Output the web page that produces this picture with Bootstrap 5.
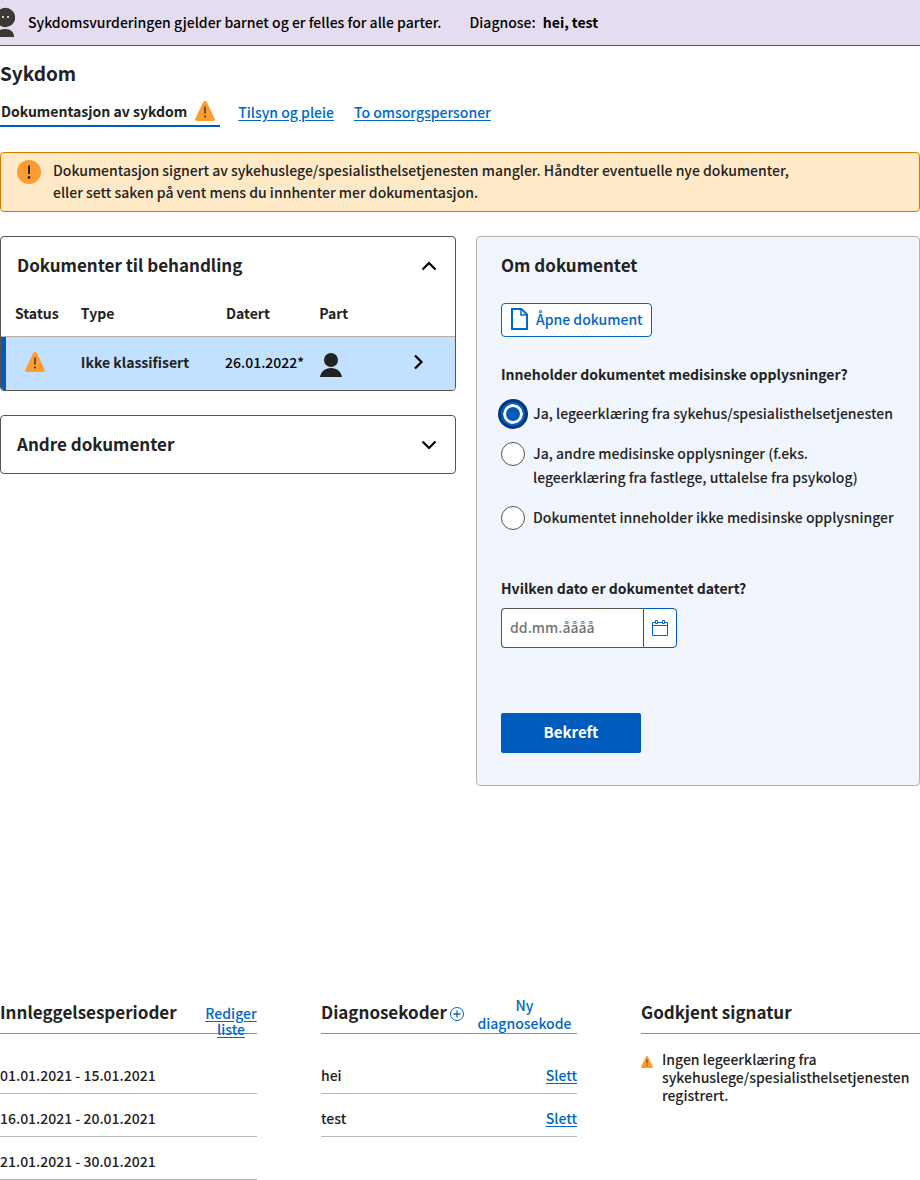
<!DOCTYPE html>
<html lang="nb">
<head>
<meta charset="utf-8">
<meta name="viewport" content="width=device-width, initial-scale=1">
<title>Sykdom</title>
<link href="https://cdn.jsdelivr.net/npm/bootstrap@5.3.0/dist/css/bootstrap.min.css" rel="stylesheet">
<style>
  :root { --blue: #005bbd; --link: #0067c5; --ink: #222; --line: #b7b1a9; }
  body { font-family: "Noto Sans CJK SC", "Noto Sans", sans-serif; font-size: 14px; font-weight: 500; line-height: 24px; color: var(--ink); }
  svg { display: block; flex: none; }
  a, button, input { font-weight: 500; }
  a, .link-btn { color: var(--link); text-underline-offset: 2px; }
  .link-btn { background: none; border: 0; padding: 0; }
  h1, h2 { font-weight: 600; margin: 0; }
  h1 { font-size: 19px; line-height: 28px; margin-top: 13px; }
  h2 { font-size: 17px; line-height: 24px; }

  .child-banner { background: #e6dcef; border-bottom: 1px solid #634689; color: #000; min-height: 46px; padding-bottom: 2px; }
  .child-banner .facts { gap: 28px; margin-left: 13px; }

  .page-tabs { margin-top: 11px; gap: 20px; }
  .page-tabs .nav-link { padding: 0 0 2px; color: var(--link); text-decoration: underline; }
  .page-tabs .nav-link.active { padding: 0 5px 2px 1px; gap: 8px; min-height: 29px; color: var(--ink); font-weight: 600; text-decoration: none; border-bottom: 2px solid var(--blue); margin-right: -2px; }

  .notice { margin: 25px 0 24px; padding: 7px 16px; gap: 12px; background: #ffe9c6; border: 1px solid #d47b00; border-radius: 4px; line-height: 22px; color: var(--ink); }
  .notice p { max-width: 750px; margin-top: -1px; margin-bottom: 1px; }

  .workspace { display: grid; grid-template-columns: 456fr 444fr; gap: 20px; align-items: start; }
  .doc-panel { border: 1px solid #59514b; border-radius: 4px; overflow: hidden; background: #fff; }
  .doc-panel + .doc-panel { margin-top: 24px; }
  .panel-toggle { width: 100%; min-height: 57px; padding: 0 18px 0 16px; background: none; border: 0; color: var(--ink); text-align: left; }
  .panel-toggle h2 { padding-bottom: 2px; }
  .doc-table { table-layout: fixed; width: 100%; }
  .doc-table th, .doc-table td { padding: 0 0 2px 14px; font-weight: 600; }
  .doc-table thead th { height: 42px; padding-bottom: 4px; border-bottom: 1px solid var(--line); }
  .doc-table tbody tr { background: #c2e0ff; height: 54px; }
  .doc-table tbody td:first-child { padding-left: 24px; background: linear-gradient(90deg, var(--blue) 5px, transparent 5px); }
  .doc-table td.dated { padding-left: 13px; font-weight: 500; color: #000; }
  .doc-table td.party { padding-top: 4px; padding-bottom: 0; }

  .detail { background: #f1f5fd; border: 1px solid #b7b1a9; border-radius: 4px; padding: 16px 24px 32px; }
  .open-doc { margin-top: 26px; height: 34px; padding: 0 8px 2px; gap: 8px; background: #fff; color: var(--link); border: 1px solid var(--link); border-radius: 4px; }
  .question { display: block; font-size: 14px; line-height: 24px; font-weight: 600; margin: 0; }
  .choices { margin-top: 25px; }
  .choices .question { margin-bottom: 16px; }
  .choice { display: flex; gap: 8px; }
  .choice + .choice { margin-top: 16px; }
  .choice label { margin: -1px 0 1px; }
  .choice .form-check-input { flex: none; width: 24px; height: 24px; margin: 0; border: 1px solid #59514b; background-color: #fff; }
  .choice .form-check-input:checked { background-image: none; background-color: var(--blue); border: 2px solid #0060c5; box-shadow: inset 0 0 0 3px #fff, 0 0 0 3px #00347d; }
  .date-label { margin: 46px 0 8px; }
  .date-field { width: 176px; height: 40px; }
  .date-field input { min-width: 0; flex: 1; padding: 0 8px 2px; border: 1px solid #59514b; border-right: 0; border-radius: 4px 0 0 4px; background: #fff; color: var(--ink); }
  .date-field input::placeholder { color: #757575; opacity: 1; }
  .date-field button { width: 34px; padding: 0; display: grid; place-items: center; background: #fff; border: 1px solid var(--blue); border-radius: 0 4px 4px 0; }
  .confirm { margin-top: 65px; width: 140px; height: 40px; padding: 0 0 2px; background: var(--blue); color: #fff; border: 0; border-radius: 2px; font-size: 15px; font-weight: 600; }

  .summary { display: grid; grid-template-columns: 257fr 256fr 279fr; gap: 64px; margin-top: 210px; }
  .summary header { display: flex; align-items: flex-start; height: 38px; border-bottom: 1px solid #8c8c8c; margin-bottom: 17px; }
  .summary header h2 { line-height: 32px; }
  .edit-list { line-height: 16px; width: 52px; margin-left: auto; padding-top: 9px; text-decoration: underline; }
  .add-code { display: flex; flex: 1; line-height: 18px; }
  .add-code svg { margin: 11px 0 0 3px; }
  .add-code span { flex: 1; padding: 0 4px 0 12px; }
  .rows li { display: flex; justify-content: space-between; padding: 12px 0 6px; border-bottom: 1px solid #b7b7b7; }
  .missing { display: flex; gap: 9px; line-height: 18px; }
  .missing svg { margin-top: 5px; }
  .missing p { margin-top: -1px; }
</style>
</head>
<body>
<svg width="0" height="0" class="position-absolute" aria-hidden="true">
  <symbol id="warn" viewBox="0 0 20 20">
    <path d="M10 0c.8 0 1.400.4 1.800 1.100l7.900 16.600c.6 1.200-.1 2.300-1.300 2.300H1.600C.4 20-.3 18.900.3 17.700L8.200 1.100C8.600.4 9.200 0 10 0z" fill="#ff9c30"/>
    <path d="M10 5.500v7" stroke="#3e3832" stroke-width="1.500"/><circle cx="10" cy="15.500" r="1.100" fill="#3e3832"/>
  </symbol>
</svg>

<div class="child-banner d-flex align-items-center">
  <svg width="15" height="38" viewBox="0 0 15 38" aria-hidden="true">
    <circle cx="5.500" cy="14.500" r="9.700" fill="#3e3832"/><circle cx="3" cy="14" r="1" fill="#fff"/><circle cx="8" cy="14" r="1" fill="#fff"/>
    <path d="M-4 34c0-5 3-8 9-8s9 3 9 8z" fill="#3e3832"/>
  </svg>
  <div class="facts d-flex flex-wrap">
    <span>Sykdomsvurderingen gjelder barnet og er felles for alle parter.</span>
    <span>Diagnose: <b class="ms-1">hei, test</b></span>
  </div>
</div>

<main>
  <h1>Sykdom</h1>
  <nav class="page-tabs nav align-items-center">
    <a class="nav-link active d-flex align-items-center" aria-current="page" href="#dokumentasjon">Dokumentasjon av sykdom
      <svg width="20" height="20" aria-hidden="true"><use href="#warn"/></svg></a>
    <a class="nav-link" href="#tilsyn">Tilsyn og pleie</a>
    <a class="nav-link" href="#omsorg">To omsorgspersoner</a>
  </nav>

  <div class="notice d-flex" role="alert">
    <svg width="24" height="24" viewBox="0 0 24 24" aria-hidden="true"><circle cx="12" cy="12" r="12" fill="#ff9c30"/><path d="M12 5.500v8.500" stroke="#222" stroke-width="2"/><circle cx="12" cy="17.500" r="1.400" fill="#222"/></svg>
    <p>Dokumentasjon signert av sykehuslege/spesialisthelsetjenesten mangler. Håndter eventuelle nye dokumenter, eller sett saken på vent mens du innhenter mer dokumentasjon.</p>
  </div>

  <div class="workspace">
    <div>
      <section class="doc-panel">
        <button type="button" class="panel-toggle d-flex align-items-center justify-content-between" aria-expanded="true">
          <h2>Dokumenter til behandling</h2>
          <svg width="16" height="10" viewBox="0 0 16 10" fill="none" stroke="#000" stroke-width="2.200"><path d="M1.500 8.500L8 2l6.500 6.500"/></svg>
        </button>
        <table class="doc-table">
          <colgroup><col style="width:14.5%"><col style="width:32%"><col style="width:20.5%"><col style="width:21%"><col style="width:12%"></colgroup>
          <thead><tr><th scope="col">Status</th><th scope="col">Type</th><th scope="col">Datert</th><th scope="col">Part</th><th aria-label="Velg"></th></tr></thead>
          <tbody><tr>
            <td><svg width="20" height="20" aria-hidden="true"><use href="#warn"/></svg></td>
            <td>Ikke klassifisert</td>
            <td class="dated">26.01.2022*</td>
            <td class="party"><svg width="24" height="24" viewBox="0 0 24 24" fill="#222" aria-hidden="true"><circle cx="12" cy="7" r="7"/><path d="M1 24c1-5.500 5-9 11-9s10 3.500 11 9z"/></svg></td>
            <td><svg width="10" height="16" viewBox="0 0 10 16" fill="none" stroke="#000" stroke-width="2.200" aria-hidden="true"><path d="M1 1.500L7.500 8L1 14.500"/></svg></td>
          </tr></tbody>
        </table>
      </section>
      <section class="doc-panel">
        <button type="button" class="panel-toggle d-flex align-items-center justify-content-between" aria-expanded="false">
          <h2>Andre dokumenter</h2>
          <svg width="16" height="10" viewBox="0 0 16 10" fill="none" stroke="#000" stroke-width="2.200"><path d="M1.500 1.500L8 8l6.500-6.500"/></svg>
        </button>
      </section>
    </div>

    <form class="detail">
      <h2>Om dokumentet</h2>
      <button type="button" class="open-doc d-flex align-items-center">
        <svg width="18" height="22" viewBox="0 0 18 22" fill="none" stroke="#0067c5" stroke-width="2" aria-hidden="true"><path d="M2 1h9.500L17 6.500V21H2z"/><path d="M11 1v6h6" stroke-width="1.500"/></svg>
        Åpne dokument
      </button>
      <fieldset class="choices">
        <legend class="question">Inneholder dokumentet medisinske opplysninger?</legend>
        <div class="choice"><input class="form-check-input" type="radio" name="innhold" id="c1" checked><label for="c1">Ja, legeerklæring fra sykehus/spesialisthelsetjenesten</label></div>
        <div class="choice"><input class="form-check-input" type="radio" name="innhold" id="c2"><label for="c2">Ja, andre medisinske opplysninger (f.eks.<br>legeerklæring fra fastlege, uttalelse fra psykolog)</label></div>
        <div class="choice"><input class="form-check-input" type="radio" name="innhold" id="c3"><label for="c3">Dokumentet inneholder ikke medisinske opplysninger</label></div>
      </fieldset>
      <label class="question date-label" for="dato">Hvilken dato er dokumentet datert?</label>
      <div class="date-field d-flex">
        <input type="text" id="dato" placeholder="dd.mm.åååå">
        <button type="button" aria-label="Åpne datovelger"><svg width="16" height="16" viewBox="0 0 16 16" fill="none" stroke="#0067c5" aria-hidden="true"><path d="M3 2.500H.5v13h15v-13H13M6 2.500h4M.5 5.500h15"/><path d="M3.500.5h2v3h-2zM10.500.5h2v3h-2z"/></svg></button>
      </div>
      <button type="submit" class="confirm">Bekreft</button>
    </form>
  </div>

  <div class="summary">
    <section>
      <header><h2>Innleggelsesperioder</h2><button type="button" class="link-btn edit-list">Rediger liste</button></header>
      <ul class="rows list-unstyled mb-0"><li>01.01.2021 - 15.01.2021</li><li>16.01.2021 - 20.01.2021</li><li>21.01.2021 - 30.01.2021</li></ul>
    </section>
    <section>
      <header><h2>Diagnosekoder</h2>
        <button type="button" class="link-btn add-code"><svg width="14" height="14" viewBox="0 0 14 14" fill="none" stroke="#0067c5" aria-hidden="true"><circle cx="7" cy="7" r="6.500"/><path d="M7 3.500v7M3.500 7h7" stroke-width="1.300"/></svg><span>Ny diagnosekode</span></button></header>
      <ul class="rows list-unstyled mb-0"><li>hei <button type="button" class="link-btn text-decoration-underline">Slett</button></li><li>test <button type="button" class="link-btn text-decoration-underline">Slett</button></li></ul>
    </section>
    <section>
      <header><h2>Godkjent signatur</h2></header>
      <div class="missing"><svg width="12" height="12" aria-hidden="true"><use href="#warn"/></svg><p class="mb-0">Ingen legeerklæring fra sykehuslege/spesialisthelsetjenesten registrert.</p></div>
    </section>
  </div>
</main>
<script src="https://cdn.jsdelivr.net/npm/bootstrap@5.3.0/dist/js/bootstrap.bundle.min.js"></script>
</body>
</html>
